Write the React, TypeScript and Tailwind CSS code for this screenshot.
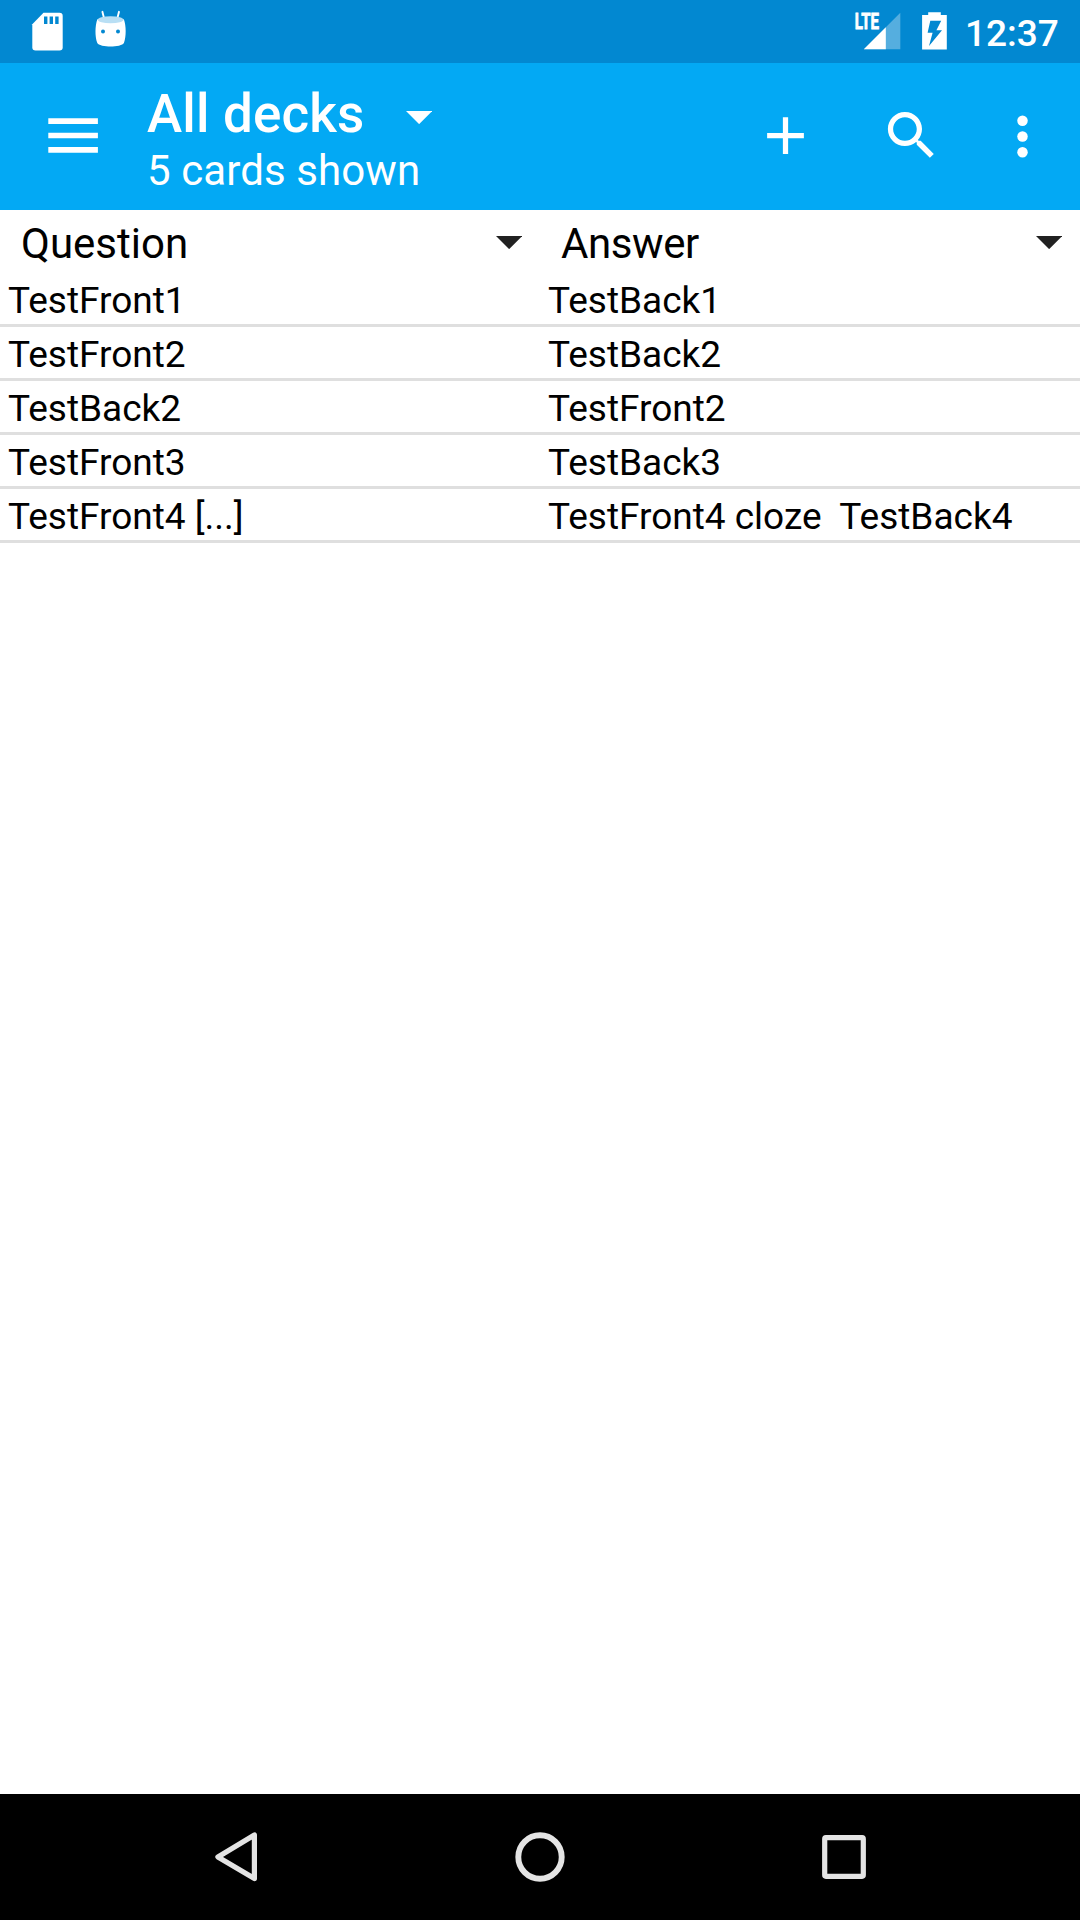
import React from "react";

const cards = [
  { question: "TestFront1", answer: "TestBack1" },
  { question: "TestFront2", answer: "TestBack2" },
  { question: "TestBack2", answer: "TestFront2" },
  { question: "TestFront3", answer: "TestBack3" },
  { question: "TestFront4 [...]", answer: "TestFront4 cloze  TestBack4" },
];

function SdCardIcon() {
  return (
    <svg className="h-[63px] w-[63px]" viewBox="0 0 63 63">
      <path
        d="M43.5 12.7H59.5a3.2 3.2 0 0 1 3.2 3.2V47.3a3.2 3.2 0 0 1-3.2 3.2H35.5a3.2 3.2 0 0 1-3.2-3.2V24.2z"
        fill="#fff"
      />
      <path d="M44 16.5h3.4V24H44zM49.6 16.5h3.4V24h-3.4zM55.2 16.5h3.4V24h-3.4z" fill="#0288d1" />
    </svg>
  );
}

function DroidIcon() {
  return (
    <svg className="h-[63px] w-[63px]" viewBox="79 0 63 63">
      <path d="M102.4 11.8l1.7 6.6M119 11.8l-1.7 6.6" stroke="#fff" strokeWidth="1.9" strokeLinecap="round" />
      <path
        d="M97.3 19.2C95 26 94.8 36 97.2 42.8C98.2 45.4 105 46.6 110.6 46.6S122.9 45.4 124 42.8C126.4 36 126.2 26 123.9 19.2Q110.6 23 97.3 19.2z"
        fill="#fff"
      />
      <ellipse cx="110.6" cy="19.7" rx="12.9" ry="3.5" fill="#b9dff4" />
      <circle cx="103" cy="31.5" r="2" fill="#0288d1" />
      <circle cx="118" cy="31.5" r="2" fill="#0288d1" />
    </svg>
  );
}

function SignalIcon() {
  return (
    <svg className="h-[63px] w-[50px]" viewBox="853 0 50 63">
      <path d="M900.3 12.7V49.2H863.8z" fill="#55aedf" />
      <path d="M885.8 27.2V49.2H863.8z" fill="#fff" />
      <text
        x="854.8"
        y="29"
        textLength="24.2"
        lengthAdjust="spacingAndGlyphs"
        fill="#fff"
        stroke="#fff"
        strokeWidth="0.8"
        className="font-[Roboto,sans-serif] text-[21.5px] font-bold"
      >
        LTE
      </text>
    </svg>
  );
}

function BatteryIcon() {
  return (
    <svg className="h-[63px] w-[27px]" viewBox="921 0 27 63">
      <path d="M928.2 12.2h12.6v2.9h6v34.5h-24.7V15.1h6.1z" fill="#fff" />
      <path d="M930.3 20.800h10.900l-4.800 9.500h5.600L929 46l3.600-13.200h-5z" fill="#0288d1" />
    </svg>
  );
}

function StatusBar() {
  return (
    <div className="flex h-[63px] items-center justify-between bg-[#0288d1] pr-[21px]">
      <div className="flex gap-4">
        <SdCardIcon />
        <DroidIcon />
      </div>
      <div className="flex items-center">
        <SignalIcon />
        <div className="w-[18px]" />
        <BatteryIcon />
        <span className="ml-[17px] w-[94px] pt-[3px] text-[37px] leading-[43px] font-medium whitespace-nowrap text-white">12:37</span>
      </div>
    </div>
  );
}

function Caret({ className }: { className: string }) {
  return (
    <svg className={className} viewBox="0 0 26.25 13.125">
      <path d="M0 0H26.25L13.125 13.125z" fill="currentColor" />
    </svg>
  );
}

function AppBar() {
  return (
    <div className="flex h-[147px] bg-[#03a9f4] text-white">
      <button className="flex w-[147px] items-center pl-[48px]" aria-label="Menu">
        <svg className="mb-[2px] h-[35px] w-[50px]" viewBox="0 0 50 35">
          <path d="M.3 .3H49.9V5.9H.3zM.3 14.7H49.9V20.3H.3zM.3 29.1H49.9V34.7H.3z" fill="#fff" />
        </svg>
      </button>
      <div className="flex flex-1 flex-col pt-[20px]">
        <div className="flex items-center">
          <span className="text-[53px] leading-[62px] font-medium tracking-[0.15px] whitespace-nowrap">All decks</span>
          <Caret className="mt-[7px] ml-[41.5px] h-[13.125px] w-[26.25px]" />
        </div>
        <span className="pt-px text-[42px] leading-[50px] tracking-[0.1px] whitespace-nowrap">5 cards shown</span>
      </div>
      <div className="flex pt-[41px] pr-[26px]">
        <svg className="mr-[63px] h-[63px] w-[63px]" viewBox="0 0 24 24">
          <path d="M19 13h-6v6h-2v-6H5v-2h6V5h2v6h6z" fill="#fff" />
        </svg>
        <svg className="mr-[48px] h-[63px] w-[63px]" viewBox="0 0 24 24">
          <path
            d="M15.5 14h-.79l-.28-.27C15.41 12.59 16 11.11 16 9.5 16 5.91 13.09 3 9.5 3S3 5.91 3 9.5 5.91 16 9.5 16c1.61 0 3.09-.59 4.23-1.57l.27.28v.79l5 4.99L20.49 19l-4.99-5zm-6 0C7.01 14 5 11.99 5 9.5S7.01 5 9.5 5 14 7.01 14 9.5 11.99 14 9.5 14z"
            fill="#fff"
          />
        </svg>
        <svg className="mt-px h-[63px] w-[63px]" viewBox="0 0 24 24">
          <circle cx="12" cy="6" r="2" fill="#fff" />
          <circle cx="12" cy="12" r="2" fill="#fff" />
          <circle cx="12" cy="18" r="2" fill="#fff" />
        </svg>
      </div>
    </div>
  );
}

function ColumnHeader({ children }: { children: React.ReactNode }) {
  return (
    <div className="flex h-[63px] items-start justify-between pr-[18px] pl-[21px] text-[42px] leading-[50px] text-black">
      {children}
      <Caret className="mt-[26px] h-[13.125px] w-[26.25px] text-[#212121]" />
    </div>
  );
}

function CardRow({ question, answer }: { question: string; answer: string }) {
  return (
    <div className="grid h-[54px] grid-cols-2 border-b-[3px] border-[#dfdfdf] text-[37px] leading-[43px] text-black">
      <span className="pt-[6px] pl-[7.875px] whitespace-pre">{question}</span>
      <span className="pt-[6px] pl-[7.875px] whitespace-pre">{answer}</span>
    </div>
  );
}

function NavBar() {
  return (
    <div className="grid h-[126px] grid-cols-3 items-center justify-items-center bg-black px-[84px]">
      <svg className="h-[60px] w-[60px]" viewBox="206 1827 60 60" fill="none" stroke="#e4e4e4">
        <path d="M254.4 1834.9V1878.6L217.9 1856.9z" strokeWidth="5.2" strokeLinejoin="round" />
      </svg>
      <svg className="h-[60px] w-[60px]" viewBox="510 1827 60 60" fill="none" stroke="#e4e4e4">
        <circle cx="540" cy="1857" r="21.7" strokeWidth="5.9" />
      </svg>
      <svg className="h-[60px] w-[60px]" viewBox="814 1827 60 60" fill="none" stroke="#e4e4e4">
        <rect x="824.7" y="1837.7" width="38.6" height="38.6" rx="1.2" strokeWidth="5.2" />
      </svg>
    </div>
  );
}

export default function App() {
  return (
    <div className="flex h-[1920px] w-[1080px] flex-col bg-white font-[Roboto,sans-serif]">
      <StatusBar />
      <AppBar />
      <main className="flex-1">
        <div className="grid grid-cols-2">
          <ColumnHeader>
            <span className="pt-[9px]">Question</span>
          </ColumnHeader>
          <ColumnHeader>
            <span className="pt-[9px] tracking-[-0.4px]">Answer</span>
          </ColumnHeader>
        </div>
        {cards.map((card) => (
          <CardRow key={card.question} question={card.question} answer={card.answer} />
        ))}
      </main>
      <NavBar />
    </div>
  );
}
